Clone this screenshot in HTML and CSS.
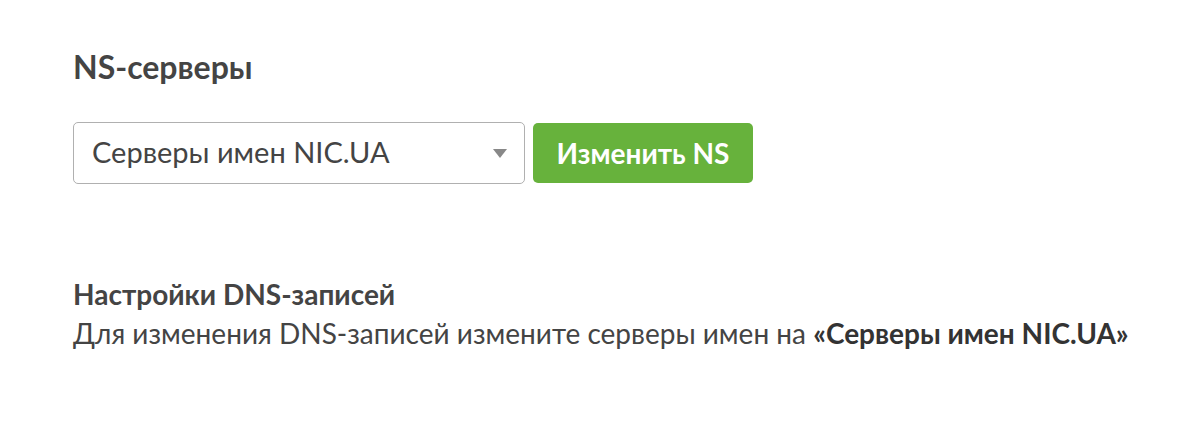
FILE: index.html
```html
<!DOCTYPE html>
<html lang="ru">
<head>
  <meta charset="UTF-8">
  <title>NS-серверы</title>
  <link rel="stylesheet" href="styles.css">
</head>
<body>
  <div class="page">
    <h2 class="section-title">NS-серверы</h2>
    <div class="ns-form">
      <div class="select">
        <span class="select-value">Серверы имен NIC.UA</span>
        <span class="select-arrow"></span>
      </div>
      <button type="button" class="btn-green">Изменить NS</button>
    </div>

    <div class="dns-info">
      <h3 class="dns-title">Настройки DNS-записей</h3>
      <p class="dns-text">Для изменения DNS-записей измените серверы имен на <b>«Серверы имен NIC.UA»</b></p>
    </div>
  </div>
</body>
</html>
```

FILE: styles.css
```css
body {
  margin: 0;
  font-family: Lato, "Open Sans", sans-serif;
  background-color: #fff;
  color: #444;
}
.page {
  padding: 48px 30px 48px 73px;
}
.section-title {
  font-size: 32px;
  font-weight: 700;
  margin: 0 0 36px;
  line-height: 38px;
}
.ns-form {
  display: flex;
  align-items: center;
  gap: 8px;
}
.select {
  width: 452px;
  height: 62px;
  box-sizing: border-box;
  border: 1px solid #b0b0b0;
  border-radius: 5px;
  display: flex;
  align-items: center;
  justify-content: space-between;
  padding: 0 17px 3px 18px;
}
.select-value {
  font-size: 29px;
  color: #444;
}
.select-arrow {
  width: 0;
  height: 0;
  margin-top: 3px;
  border-left: 7px solid transparent;
  border-right: 7px solid transparent;
  border-top: 9px solid #888;
}
.btn-green {
  height: 60px;
  width: 220px;
  background-color: #67b23c;
  color: #fff;
  border: none;
  border-radius: 5px;
  font-family: inherit;
  font-size: 28px;
  font-weight: 700;
  cursor: pointer;
}
.dns-info {
  margin-top: 91px;
}
.dns-title {
  font-size: 28px;
  font-weight: 700;
  margin: 0;
  line-height: 39px;
}
.dns-text {
  font-size: 28px;
  margin: 0;
  line-height: 39px;
  white-space: nowrap;
}
.dns-text b {
  color: #333;
}
```
